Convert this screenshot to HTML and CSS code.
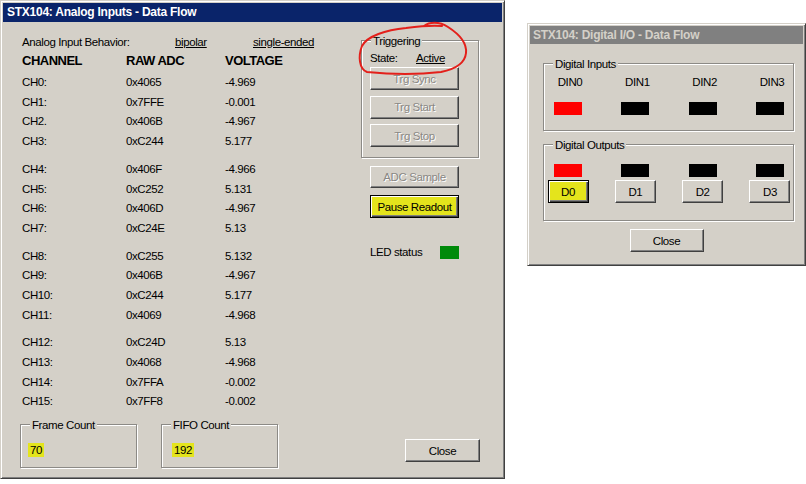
FILE: index.html
```html
<!DOCTYPE html>
<html>
<head>
<meta charset="utf-8">
<title>STX104 Data Flow</title>
<link rel="stylesheet" href="styles.css">
</head>
<body>
<div class="desk">
  <div class="win win-analog">
    <div class="titlebar active">STX104: Analog Inputs - Data Flow</div>
    <div class="analog-main">
      <div class="channels">
        <div class="behavior">
          <span class="beh-label">Analog Input Behavior:</span>
          <span class="beh-opt">bipolar</span>
          <span class="beh-opt">single-ended</span>
        </div>
        <div class="ch-head"><span>CHANNEL</span><span>RAW ADC</span><span>VOLTAGE</span></div>
        <div class="ch-list">
          <div class="ch-group">
            <div class="ch-row"><span>CH0:</span><span>0x4065</span><span>-4.969</span></div>
            <div class="ch-row"><span>CH1:</span><span>0x7FFE</span><span>-0.001</span></div>
            <div class="ch-row"><span>CH2.</span><span>0x406B</span><span>-4.967</span></div>
            <div class="ch-row"><span>CH3:</span><span>0xC244</span><span>5.177</span></div>
          </div>
          <div class="ch-group">
            <div class="ch-row"><span>CH4:</span><span>0x406F</span><span>-4.966</span></div>
            <div class="ch-row"><span>CH5:</span><span>0xC252</span><span>5.131</span></div>
            <div class="ch-row"><span>CH6:</span><span>0x406D</span><span>-4.967</span></div>
            <div class="ch-row"><span>CH7:</span><span>0xC24E</span><span>5.13</span></div>
          </div>
          <div class="ch-group">
            <div class="ch-row"><span>CH8:</span><span>0xC255</span><span>5.132</span></div>
            <div class="ch-row"><span>CH9:</span><span>0x406B</span><span>-4.967</span></div>
            <div class="ch-row"><span>CH10:</span><span>0xC244</span><span>5.177</span></div>
            <div class="ch-row"><span>CH11:</span><span>0x4069</span><span>-4.968</span></div>
          </div>
          <div class="ch-group">
            <div class="ch-row"><span>CH12:</span><span>0xC24D</span><span>5.13</span></div>
            <div class="ch-row"><span>CH13:</span><span>0x4068</span><span>-4.968</span></div>
            <div class="ch-row"><span>CH14:</span><span>0x7FFA</span><span>-0.002</span></div>
            <div class="ch-row"><span>CH15:</span><span>0x7FF8</span><span>-0.002</span></div>
          </div>
        </div>
      </div>
      <div class="side">
        <div class="group trig">
          <span class="group-title">Triggering</span>
          <div class="state-row"><span class="state-label">State:</span><span class="state-val">Active</span></div>
          <div class="trig-buttons">
            <button class="btn btn-side disabled">Trg Sync</button>
            <button class="btn btn-side disabled">Trg Start</button>
            <button class="btn btn-side disabled">Trg Stop</button>
          </div>
        </div>
        <div class="side-actions">
          <button class="btn btn-side btn-adc disabled">ADC Sample</button>
          <button class="btn btn-side btn-pause default hl">Pause Readout</button>
          <div class="led-row"><span class="led-label">LED status</span><span class="led led-green"></span></div>
        </div>
      </div>
    </div>
    <div class="analog-foot">
      <div class="group count count-frame">
        <span class="group-title">Frame Count</span>
        <span class="count-val">70</span>
      </div>
      <div class="group count count-fifo">
        <span class="group-title">FIFO Count</span>
        <span class="count-val">192</span>
      </div>
      <button class="btn btn-close-analog">Close</button>
    </div>
    <svg class="annot" viewBox="0 0 505 100" width="505" height="100">
      <path d="M 423 25 C 428 21, 438 20, 447 26 C 458 33, 466 42, 465 52 C 464 62, 455 68, 440 71 C 415 74, 385 73, 366 71 C 358 68, 357 55, 361 45 C 366 35, 385 29, 405 27 C 420 25, 432 24, 441 25" fill="none" stroke="#e3201b" stroke-width="2" stroke-linecap="round"/>
    </svg>
  </div>

  <div class="win win-dio">
    <div class="titlebar inactive">STX104: Digital I/O - Data Flow</div>
    <div class="dio-body">
      <div class="group dio-group dio-inputs">
        <span class="group-title">Digital Inputs</span>
        <div class="io-cols">
          <div class="io-col"><span class="din">DIN0</span><span class="led led-io led-red"></span></div>
          <div class="io-col"><span class="din">DIN1</span><span class="led led-io led-black"></span></div>
          <div class="io-col"><span class="din">DIN2</span><span class="led led-io led-black"></span></div>
          <div class="io-col"><span class="din">DIN3</span><span class="led led-io led-black"></span></div>
        </div>
      </div>
      <div class="group dio-group dio-outputs">
        <span class="group-title">Digital Outputs</span>
        <div class="io-cols">
          <div class="io-col"><span class="led led-io led-red"></span><button class="btn btn-d default hl">D0</button></div>
          <div class="io-col"><span class="led led-io led-black"></span><button class="btn btn-d">D1</button></div>
          <div class="io-col"><span class="led led-io led-black"></span><button class="btn btn-d">D2</button></div>
          <div class="io-col"><span class="led led-io led-black"></span><button class="btn btn-d">D3</button></div>
        </div>
      </div>
      <button class="btn btn-close-dio">Close</button>
    </div>
  </div>
</div>
</body>
</html>
```

FILE: styles.css
```css
body {
  margin: 0;
  background: #fff;
  font-family: "Liberation Sans", Arial, sans-serif;
  font-size: 11.5px;
  letter-spacing: -0.4px;
  color: #000;
}

.desk {
  display: flex;
  align-items: flex-start;
  gap: 22px;
}

.win {
  box-sizing: border-box;
  background: #d4d0c8;
  border: 1px solid;
  border-color: #d4d0c8 #404040 #404040 #d4d0c8;
  box-shadow: inset 1px 1px #fff, inset -1px -1px #808080;
  padding: 2px;
  display: flex;
  flex-direction: column;
}

.win-analog {
  width: 505px;
  height: 479px;
  position: relative;
}

.win-dio {
  width: 279px;
  height: 243px;
  margin-top: 23px;
}

.titlebar {
  font-weight: bold;
  font-size: 12px;
  letter-spacing: -0.25px;
  white-space: nowrap;
}

.titlebar.active {
  height: 19px;
  line-height: 19px;
  padding-left: 4px;
  background: #0a246a;
  color: #fff;
}

.titlebar.inactive {
  height: 18px;
  line-height: 18px;
  padding-left: 3px;
  background: #808080;
  color: #d4d0c8;
}

/* ---------- groups ---------- */
.group {
  position: relative;
  box-sizing: border-box;
  border: 1px solid #8c8a86;
  box-shadow: 1px 1px 0 #fff, inset 1px 1px 0 #fff;
}

.group-title {
  position: absolute;
  top: -7px;
  left: 9px;
  padding: 0 2px;
  line-height: 14px;
  background: #d4d0c8;
  white-space: nowrap;
}

/* ---------- buttons ---------- */
.btn {
  box-sizing: border-box;
  font: inherit;
  letter-spacing: inherit;
  color: #000;
  padding: 0;
  margin: 0;
  background: #d4d0c8;
  border: 1px solid;
  border-color: #fff #404040 #404040 #fff;
  box-shadow: inset -1px -1px #808080;
  text-align: center;
}

.btn.disabled {
  color: #8a8884;
  text-shadow: 1px 1px 0 #fff;
}

.btn.default {
  border: 1px solid #000;
  box-shadow: inset 1px 1px #fff, inset -1px -1px #404040, inset -2px -2px #808080;
}

.btn.hl {
  background: #e4e41c;
}

/* ---------- analog window ---------- */
.analog-main {
  display: flex;
  padding: 12px 0 0 19px;
}

.channels {
  width: 339px;
}

.behavior {
  display: flex;
  line-height: 16px;
}

.beh-label {
  width: 153px;
}

.beh-opt {
  width: 78px;
  text-decoration: underline;
}

.ch-head {
  display: grid;
  grid-template-columns: 104px 99px auto;
  margin-top: 3px;
  line-height: 16px;
  font-weight: bold;
  font-size: 13px;
  letter-spacing: -0.5px;
}

.ch-list {
  margin-top: 4.2px;
}

.ch-group + .ch-group {
  margin-top: 8.4px;
}

.ch-row {
  display: grid;
  grid-template-columns: 104px 99px auto;
  height: 19.6px;
  line-height: 19.6px;
}

.side {
  width: 118px;
  margin-top: 6px;
  display: flex;
  flex-direction: column;
}

.trig {
  height: 118px;
  padding: 9px 0 0 8px;
}

.state-row {
  display: flex;
  line-height: 16px;
}

.state-label {
  width: 46px;
}

.state-val {
  text-decoration: underline;
}

.trig-buttons {
  display: flex;
  flex-direction: column;
  gap: 5.5px;
  margin-top: 1px;
}

.btn-side {
  width: 89px;
  height: 23px;
}

.side-actions {
  display: flex;
  flex-direction: column;
  padding-left: 9px;
}

.btn-adc {
  margin-top: 8px;
  height: 22px;
}

.btn-pause {
  margin-top: 7px;
}

.led-row {
  display: flex;
  align-items: center;
  margin-top: 26px;
  line-height: 16px;
}

.led-label {
  width: 70px;
}

.led {
  display: block;
  width: 19px;
  height: 13px;
}

.led-green {
  background: #008a0a;
}

.analog-foot {
  margin-top: auto;
  display: flex;
  align-items: flex-end;
  padding: 0 0 8px 17px;
}

.count {
  width: 117px;
  height: 44px;
  padding-top: 18px;
}

.count-frame {
  padding-left: 7px;
}

.count-fifo {
  margin-left: 24px;
  padding-left: 10px;
}

.count-val {
  display: inline-block;
  line-height: 14px;
  padding: 0 2px;
  background: #e4e41c;
}

.btn-close-analog {
  width: 75px;
  height: 23px;
  margin: 0 0 6px 127px;
}

.annot {
  position: absolute;
  left: 0;
  top: 0;
  pointer-events: none;
}

/* ---------- digital I/O window ---------- */
.dio-body {
  display: flex;
  flex-direction: column;
  padding: 19px 0 0 13px;
}

.dio-group {
  width: 251px;
}

.dio-inputs {
  height: 68px;
  padding-top: 10px;
}

.dio-outputs {
  height: 77px;
  margin-top: 13px;
  padding-top: 19px;
}

.io-cols {
  display: flex;
  justify-content: space-between;
  padding: 0 9px 0 10px;
}

.io-col {
  width: 28px;
  display: flex;
  flex-direction: column;
  align-items: center;
}

.din {
  line-height: 16px;
  white-space: nowrap;
  padding-left: 4px;
}

.led-io {
  width: 28px;
  height: 13px;
}

.dio-inputs .led-io {
  margin-top: 12px;
}

.led-red {
  background: #ff0000;
}

.led-black {
  background: #000;
}

.btn-d {
  width: 41px;
  height: 23px;
  margin-top: 3px;
  flex-shrink: 0;
}

.btn-close-dio {
  align-self: center;
  width: 74px;
  height: 23px;
  margin: 8px 0 0 -13px;
}
```
